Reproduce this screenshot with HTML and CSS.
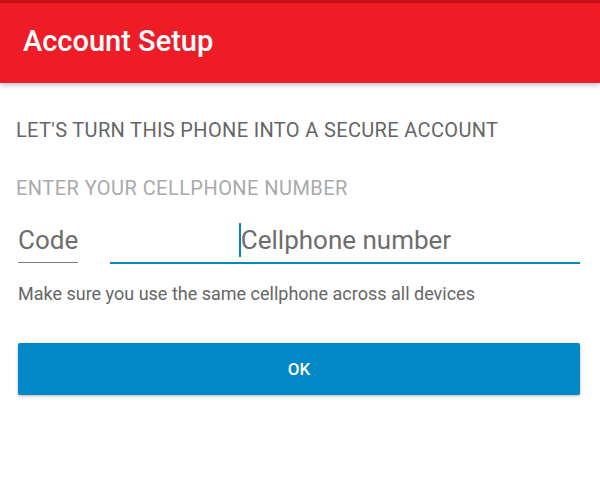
FILE: index.html
```html
<!DOCTYPE html>
<html lang="en">
<head>
    <meta charset="UTF-8">
    <meta name="viewport" content="width=device-width, initial-scale=1.0">
    <title>Account Setup</title>
    <link rel="stylesheet" href="styles.css">
</head>
<body>
    <div class="status-bar"></div>
    <header class="toolbar">
        <h1>Account Setup</h1>
    </header>

    <main class="content">
        <p class="intro">LET'S TURN THIS PHONE INTO A SECURE ACCOUNT</p>
        <p class="label">ENTER YOUR CELLPHONE NUMBER</p>

        <div class="phone-row">
            <div class="field code">
                <span class="placeholder">Code</span>
            </div>
            <div class="field number">
                <span class="cursor"></span><span class="placeholder">Cellphone number</span>
            </div>
        </div>

        <p class="hint">Make sure you use the same cellphone across all devices</p>

        <button class="ok-button">OK</button>
    </main>
</body>
</html>
```

FILE: styles.css
```css
body {
    margin: 0;
    font-family: Roboto, "Liberation Sans", sans-serif;
    background: #ffffff;
    width: 600px;
    height: 500px;
    overflow: hidden;
}
.status-bar {
    height: 3px;
    background: #cc1017;
}
.toolbar {
    height: 80px;
    background: #ed1c27;
    box-shadow: 0 2px 5px rgba(0,0,0,0.25);
    display: flex;
    align-items: center;
    padding: 0 23px;
    position: relative;
}
.toolbar h1 {
    margin: 0;
    color: #fff;
    font-size: 29px;
    font-weight: 500;
    padding-bottom: 4px;
}
.content {
    padding: 0 20px 0 16px;
}
.intro {
    margin: 35px 0 0;
    font-size: 20px;
    letter-spacing: 0.35px;
    color: #666;
}
.label {
    margin: 34px 0 0;
    font-size: 20px;
    letter-spacing: 0.45px;
    color: #aaa;
}
.phone-row {
    display: flex;
    gap: 32px;
    margin-top: 21px;
}
.field {
    height: 38px;
    padding-bottom: 3px;
    display: flex;
    align-items: center;
    font-size: 26px;
    color: #6e6e6e;
}
.field.code {
    width: 60px;
    border-bottom: 1px solid #777;
    margin-left: 2px;
}
.field.number {
    flex: 1;
    justify-content: center;
    border-bottom: 2px solid #0288c8;
}
.cursor {
    width: 2px;
    height: 34px;
    background: #0288c8;
}
.hint {
    margin: 19px 0 0 2px;
    font-size: 18px;
    color: #666;
}
.ok-button {
    display: block;
    width: 562px;
    height: 52px;
    margin: 39px 0 0 2px;
    border: 0;
    border-radius: 2px;
    background: #0288c6;
    color: #fff;
    font-family: Roboto, "Liberation Sans", sans-serif;
    font-size: 17px;
    font-weight: 500;
    box-shadow: 0 1px 3px rgba(0,0,0,0.3);
}
```
